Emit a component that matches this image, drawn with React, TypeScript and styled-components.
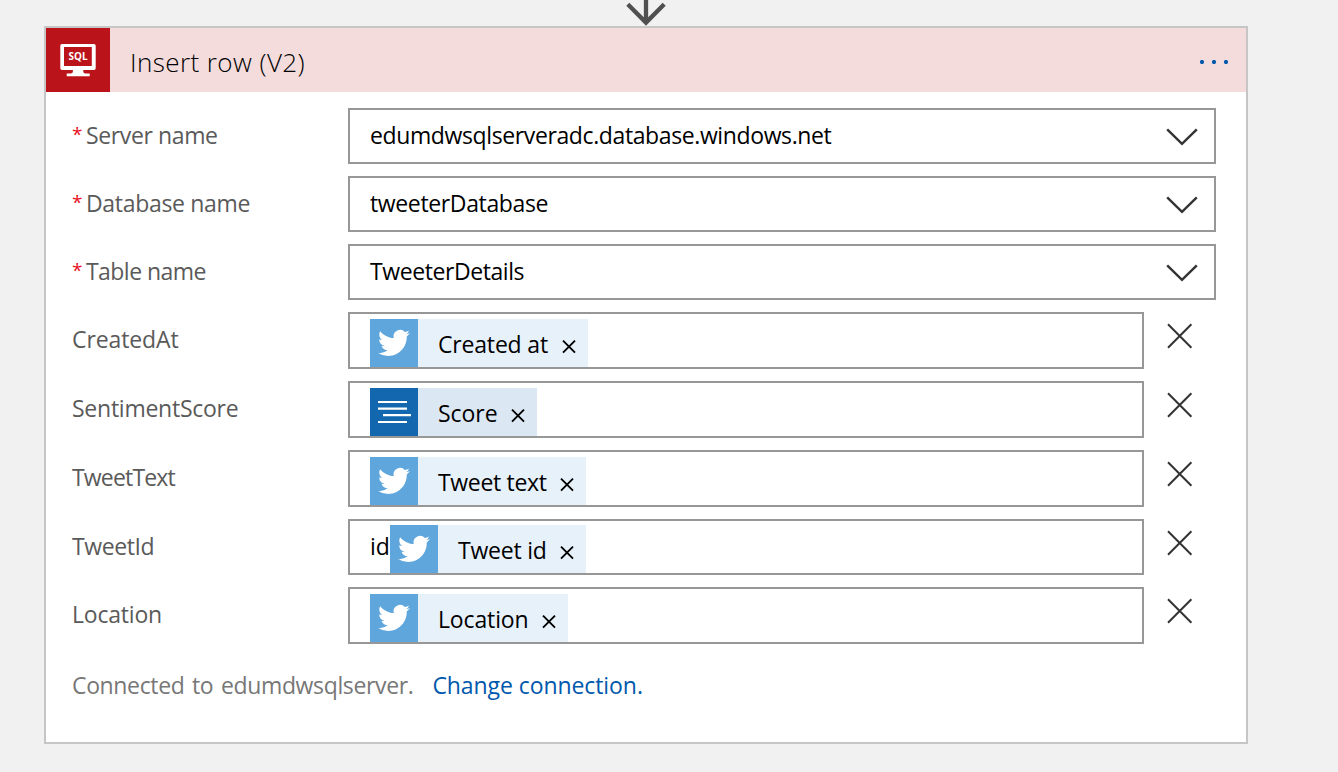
import React from "react";
import styled, { createGlobalStyle } from "styled-components";

const GlobalStyle = createGlobalStyle`
  * { box-sizing: border-box; }
  body {
    margin: 0;
    background: #f1f1f1;
    font-family: "Open Sans", "Noto Sans", sans-serif;
    font-size: 23px;
    color: #000;
    overflow: hidden;
  }
`;

const Page = styled.main`
  width: 1338px;
  height: 772px;
  padding-left: 44px;
`;

const Flow = styled.div`
  width: 1204px;
  display: flex;
  flex-direction: column;
`;

const Connector = styled.svg`
  display: block;
  align-self: center;
  width: 44px;
  height: 26px;
`;

const Card = styled.section`
  height: 718px;
  background: #fff;
  border: 2px solid #c6c6c6;
`;

const Header = styled.header`
  display: flex;
  align-items: center;
  height: 64px;
  padding-right: 17px;
  background: #f4dcdc;
`;

const Badge = styled.div`
  width: 64px;
  height: 64px;
  background: #ba141a;
`;

const Title = styled.h1<{ $spacing: number }>`
  flex: 1;
  margin: 0 0 0 20px;
  padding-top: 4px;
  font-size: 26px;
  font-weight: 300;
  line-height: 36px;
  letter-spacing: ${(p) => p.$spacing}px;
`;

const MenuButton = styled.button`
  display: flex;
  padding: 4px 0 0;
  border: 0;
  background: none;
`;

const Fields = styled.div`
  display: flex;
  flex-direction: column;
  gap: 12px;
  padding: 16px 30px 0 26px;
`;

const Row = styled.div`
  display: flex;
  align-items: flex-start;
`;

const Label = styled.label`
  display: flex;
  width: 276px;
  height: 56px;
  line-height: 55px;
  color: #5a5a5a;
  white-space: nowrap;
`;

const Required = styled.span`
  width: 14px;
  font-size: 19px;
  line-height: 52px;
  color: #e81123;
`;

const Text = styled.span<{ $spacing: number; $words?: number }>`
  letter-spacing: ${(p) => p.$spacing}px;
  word-spacing: ${(p) => p.$words ?? 0}px;
  white-space: nowrap;
`;

const Select = styled.div`
  display: flex;
  align-items: center;
  justify-content: space-between;
  width: 868px;
  height: 56px;
  padding: 0 16px 2px 20px;
  border: 2px solid #979797;
`;

const TokenInput = styled.div<{ $height: number }>`
  display: flex;
  align-items: flex-end;
  width: 796px;
  height: ${(p) => p.$height}px;
  padding-left: 20px;
  border: 2px solid #979797;
`;

const Prefix = styled.span`
  width: 20px;
  line-height: 54px;
  height: 54px;
  white-space: nowrap;
`;

const Token = styled.div<{ $width: number; $tint: string }>`
  display: flex;
  align-items: center;
  width: ${(p) => p.$width}px;
  height: 48px;
  padding-right: 11px;
  background: ${(p) => p.$tint};
`;

const TokenIcon = styled.div<{ $color: string }>`
  display: flex;
  align-items: center;
  justify-content: center;
  width: 48px;
  height: 48px;
  margin-right: 20px;
  background: ${(p) => p.$color};
`;

const TokenText = styled(Text)`
  flex: 1;
  padding-top: 2px;
`;

const TokenClose = styled.svg`
  width: 16px;
  height: 16px;
  margin-top: 8px;
`;

const RemoveButton = styled.button`
  display: flex;
  margin: 11px 0 0 23px;
  padding: 0;
  border: 0;
  background: none;
`;

const Footer = styled.footer`
  display: flex;
  gap: 19px;
  padding: 25px 0 0 26px;
  line-height: 32px;
  color: #777;
`;

const Link = styled.a`
  color: #0058ad;
`;

const ArrowDown = () => (
  <Connector viewBox="0 0 44 26" fill="none" stroke="#505050" strokeWidth="4.300">
    <path d="M22 0V22M3.800 4.200L22 22.600L40.200 4.200" />
  </Connector>
);

const SqlIcon = () => (
  <svg width="64" height="64" viewBox="0 0 64 64">
    <path
      fill="#fff"
      fillRule="evenodd"
      d="M16 16h32a1.700 1.700 0 0 1 1.700 1.700v22.600A1.700 1.700 0 0 1 48 42H37.300v1.500c0 1 1 2 2.200 2h4.200v2.700H20.700V45.500h4c1.200 0 2.200-1 2.200-2V42H16a1.700 1.700 0 0 1-1.700-1.700V17.700A1.700 1.700 0 0 1 16 16zM18 19v19h27.800V19z"
    />
    <text
      x="32"
      y="32"
      fill="#fff"
      fontFamily="Open Sans, sans-serif"
      fontSize="11"
      fontWeight="700"
      textAnchor="middle"
      textLength="19"
      lengthAdjust="spacingAndGlyphs"
    >
      SQL
    </text>
  </svg>
);

const Dots = () => (
  <svg width="30" height="4" viewBox="0 0 30 4" fill="#0058ad">
    <circle cx="3" cy="2" r="2.100" />
    <circle cx="15" cy="2" r="2.100" />
    <circle cx="27" cy="2" r="2.100" />
  </svg>
);

const Chevron = () => (
  <svg width="32" height="24" viewBox="0 0 32 24" fill="none" stroke="#333" strokeWidth="2.400">
    <path d="M1.200 6.300L16 20.900L30.800 6.300" />
  </svg>
);

const RemoveIcon = () => (
  <svg width="26" height="26" viewBox="0 0 26 26" stroke="#333" strokeWidth="2">
    <path d="M1 1.200L24.400 24.800M24.400 1.200L1 24.800" />
  </svg>
);

const BirdIcon = () => (
  <svg width="32" height="32" viewBox="0 0 24 24" fill="#fff">
    <path d="M23.953 4.57a10 10 0 01-2.825.775 4.958 4.958 0 002.163-2.723c-.951.555-2.005.959-3.127 1.184a4.92 4.92 0 00-8.384 4.482C7.69 8.095 4.067 6.13 1.64 3.162a4.822 4.822 0 00-.666 2.475c0 1.71.87 3.213 2.188 4.096a4.904 4.904 0 01-2.228-.616v.06a4.923 4.923 0 003.946 4.827 4.996 4.996 0 01-2.212.085 4.936 4.936 0 004.604 3.417 9.867 9.867 0 01-6.102 2.105c-.39 0-.779-.023-1.17-.067a13.995 13.995 0 007.557 2.209c9.053 0 13.998-7.496 13.998-13.985 0-.21 0-.42-.015-.63A9.935 9.935 0 0024 4.59z" />
  </svg>
);

const LinesIcon = () => (
  <svg width="48" height="48" viewBox="0 0 48 48" fill="#fff">
    <path d="M8 13h29v2H8zM8 19.500h29v2.200H8zM13 26h28v2.300H13zM8 33h29v2H8z" />
  </svg>
);

const selects = [
  { label: "Server name", ls: -0.38, value: "edumdwsqlserveradc.database.windows.net", vs: -0.385 },
  { label: "Database name", ls: -0.32, value: "tweeterDatabase", vs: -0.36 },
  { label: "Table name", ls: -0.55, value: "TweeterDetails", vs: -0.42 },
];

const tokens = [
  { label: "CreatedAt", ls: -0.1, prefix: "", token: "Created at", ts: -0.18, width: 218, height: 57 },
  { label: "SentimentScore", ls: -0.25, prefix: "", token: "Score", ts: -0.05, width: 167, height: 57, score: true },
  { label: "TweetText", ls: -0.82, prefix: "", token: "Tweet text", ts: -0.32, width: 216, height: 57 },
  { label: "TweetId", ls: -0.4, prefix: "id", token: "Tweet id", ts: -0.22, width: 196, height: 56 },
  { label: "Location", ls: -0.2, prefix: "", token: "Location", ts: -0.14, width: 198, height: 57 },
];

export default function App() {
  return (
    <Page>
      <GlobalStyle />
      <Flow>
        <ArrowDown />
        <Card>
          <Header>
            <Badge><SqlIcon /></Badge>
            <Title $spacing={0.42}>Insert row (V2)</Title>
            <MenuButton aria-label="More"><Dots /></MenuButton>
          </Header>
          <Fields>
            {selects.map((s) => (
              <Row key={s.label}>
                <Label>
                  <Required>*</Required>
                  <Text $spacing={s.ls}>{s.label}</Text>
                </Label>
                <Select>
                  <Text $spacing={s.vs}>{s.value}</Text>
                  <Chevron />
                </Select>
              </Row>
            ))}
            {tokens.map((t) => (
              <Row key={t.label}>
                <Label><Text $spacing={t.ls}>{t.label}</Text></Label>
                <TokenInput $height={t.height}>
                  {t.prefix && <Prefix>{t.prefix}</Prefix>}
                  <Token $width={t.width} $tint={t.score ? "#dbe7f3" : "#e7f1fa"}>
                    <TokenIcon $color={t.score ? "#1267ae" : "#5ea6dc"}>
                      {t.score ? <LinesIcon /> : <BirdIcon />}
                    </TokenIcon>
                    <TokenText $spacing={t.ts}>{t.token}</TokenText>
                    <TokenClose viewBox="0 0 16 16" stroke="#000" strokeWidth="1.900">
                      <path d="M2 1.700L14 13.700M14 1.700L2 13.700" />
                    </TokenClose>
                  </Token>
                </TokenInput>
                <RemoveButton aria-label={`Remove ${t.label}`}><RemoveIcon /></RemoveButton>
              </Row>
            ))}
          </Fields>
          <Footer>
            <Text $spacing={-0.36} $words={2}>Connected to edumdwsqlserver.</Text>
            <Link><Text $spacing={-0.08}>Change connection.</Text></Link>
          </Footer>
        </Card>
      </Flow>
    </Page>
  );
}
